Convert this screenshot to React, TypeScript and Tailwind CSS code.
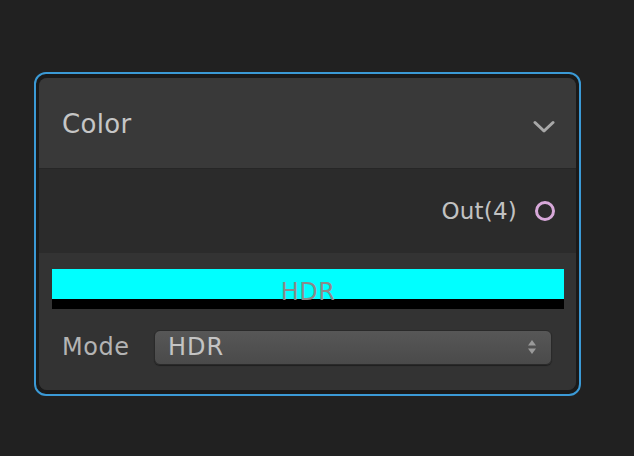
import React from 'react'

const font = { fontFamily: '"DejaVu Sans", "Liberation Sans", sans-serif' }

function Chevron() {
  return (
    <svg width="22" height="14" viewBox="0 0 22 14" fill="none">
      <path d="M2 2.5 L11 11 L20 2.5" stroke="#a8a8a8" strokeWidth="3" strokeLinecap="round" strokeLinejoin="round" />
    </svg>
  )
}

function UpDown() {
  return (
    <svg width="10" height="16" viewBox="0 0 10 16">
      <path d="M5 1 L9 6.5 H1 Z" fill="#9a9a9a" />
      <path d="M5 15 L9 9.5 H1 Z" fill="#9a9a9a" />
    </svg>
  )
}

export default function App() {
  return (
    <div className="w-[634px] h-[456px] bg-[#212121] pt-[72px] pl-[34px]" style={font}>
      <div className="w-[547px] h-[324px] rounded-[12px] border-2 border-[#3b9ad6] bg-[#1a1a1a] pt-[4px] pb-[4px] pl-[3px] pr-[3px]">
        <div className="h-full rounded-[8px] overflow-hidden flex flex-col bg-[#2b2b2b]">

          {/* Header */}
          <div className="h-[91px] shrink-0 bg-[#393939] border-b border-[#262626] flex items-center justify-between pl-[23px] pr-[21px]">
            <span className="mt-[3px] text-[26px] text-[#c6c6c6] tracking-[0.3px]">Color</span>
            <div className="mt-[8px]">
              <Chevron />
            </div>
          </div>

          {/* Output port row */}
          <div className="h-[84px] shrink-0 flex items-center justify-end pr-[21px] gap-[18px]">
            <span className="text-[23px] tracking-[0.2px] text-[#c2c2c2]">Out(4)</span>
            <div className="w-[20px] h-[20px] rounded-full border-[3px] border-[#d7a8d9] bg-[#2b2b2b]" />
          </div>

          {/* Properties */}
          <div className="flex-1 bg-[#333333] px-[13px] pt-[16px]">
            <div className="relative h-[40px] mr-[-1px]">
              <div className="h-[30px] bg-[#00ffff]" />
              <div className="h-[10px] bg-black" />
              <span className="absolute left-0 right-0 top-[9px] text-center text-[24px] leading-[28px] tracking-[0.5px] text-[#8a8a8a]">HDR</span>
            </div>
            <div className="flex items-center mt-[20px]">
              <span className="w-[102px] pl-[10px] text-[24px] tracking-[0.5px] text-[#b4b4b4]">Mode</span>
              <div className="flex-1 h-[35px] mr-[11px] rounded-[6px] border border-[#2a2a2a] bg-gradient-to-b from-[#575757] to-[#4a4a4a] flex items-center justify-between pl-[13px] pr-[14px] shadow-[0_1px_1px_rgba(0,0,0,0.4)]">
                <span className="text-[24px] tracking-[1px] text-[#c4c4c4]">HDR</span>
                <UpDown />
              </div>
            </div>
          </div>

        </div>
      </div>
    </div>
  )
}
